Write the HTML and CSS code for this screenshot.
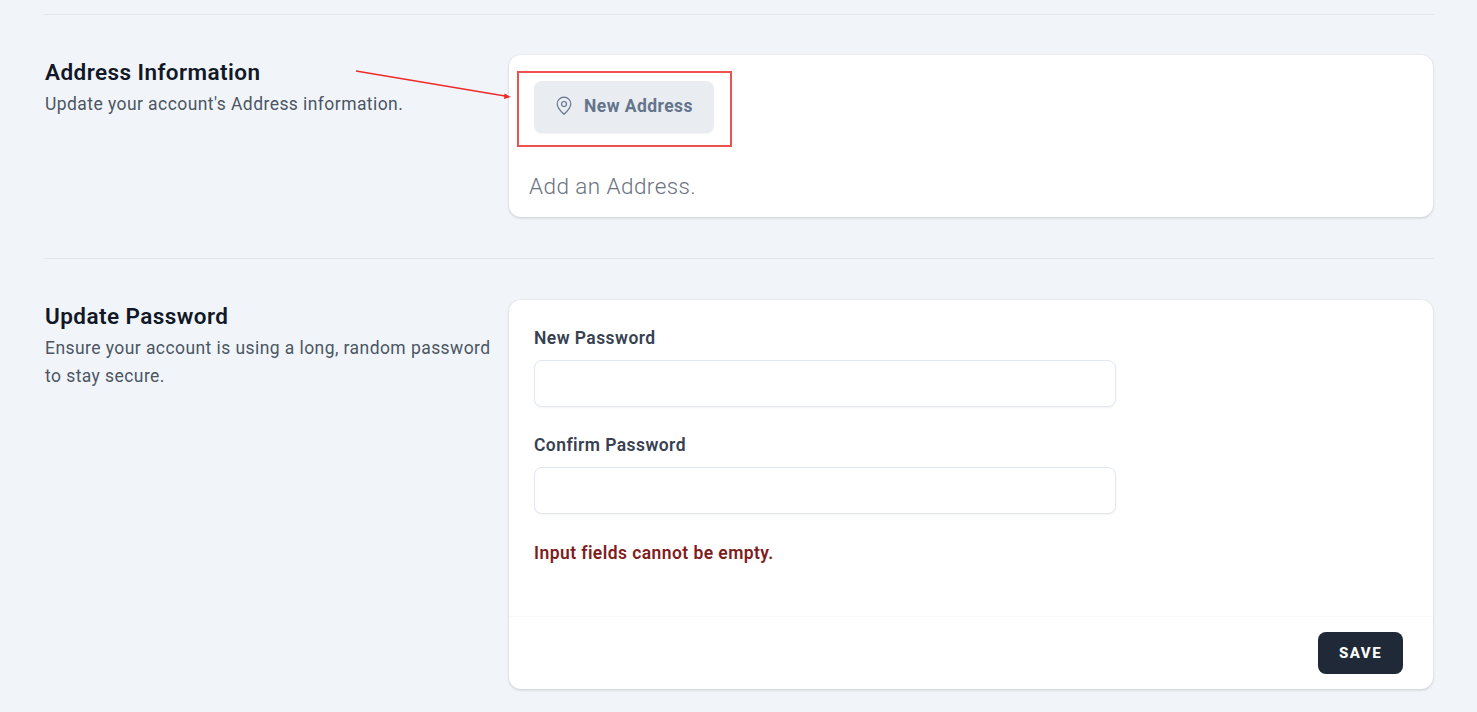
FILE: index.html
```html
<!DOCTYPE html>
<html lang="en">
<head>
<meta charset="utf-8">
<title>Profile</title>
<link rel="stylesheet" href="styles.css">
</head>
<body>
<main class="page">
  <hr class="divider">
  <section class="section section-address">
    <div class="intro">
      <h2 class="intro-title">Address Information</h2>
      <p class="intro-text">Update your account's Address information.</p>
    </div>
    <div class="card card-address">
      <button class="btn-address" type="button">
        <svg class="pin" viewBox="0 0 18 20" width="18" height="20" fill="none" stroke="currentColor" stroke-width="1.2" stroke-linecap="round" stroke-linejoin="round"><path d="M15.800 8c0 4-6.800 10.300-6.800 10.300S2.200 12 2.200 8a6.800 6.800 0 0 1 13.600 0z"/><circle cx="9" cy="8" r="2.500"/></svg>
        <span>New Address</span>
      </button>
      <p class="empty">Add an Address.</p>
    </div>
  </section>
  <hr class="divider">
  <section class="section section-password">
    <div class="intro">
      <h2 class="intro-title">Update Password</h2>
      <p class="intro-text">Ensure your account is using a long, random password to stay secure.</p>
    </div>
    <form class="card card-password">
      <div class="fields">
        <label class="label" for="new-pass">New Password</label>
        <input class="input" id="new-pass" type="password">
        <label class="label label-second" for="confirm-pass">Confirm Password</label>
        <input class="input" id="confirm-pass" type="password">
        <p class="error">Input fields cannot be empty.</p>
      </div>
      <div class="actions">
        <button class="btn-save" type="button">SAVE</button>
      </div>
    </form>
  </section>
</main>
<svg class="annotation-arrow" width="170" height="40" viewBox="0 0 170 40"><line x1="1" y1="1" x2="150" y2="26" stroke="#ee2b2b" stroke-width="1.300"/><polygon points="156,27 149.500,23.500 149,29" fill="#ee2b2b"/></svg>
<div class="annotation-box"></div>
</body>
</html>
```
FILE: styles.css
```css
* { box-sizing: border-box; }
html, body { height: 100%; }
body {
  margin: 0;
  height: 712px;
  overflow: hidden;
  background: #f1f5f9;
  font-family: Roboto, "Liberation Sans", sans-serif;
  letter-spacing: .43px;
  position: relative;
}
.page { padding: 14px 44px 0; }
.divider { margin: 0 -1px 0 0; border: 0; border-top: 1px solid #e2e8f0; }
.section {
  display: grid;
  grid-template-columns: 447px 1fr;
  gap: 18px;
}
.section-address { padding: 40px 0 41px; }
.section-password { padding: 41px 0 0; }
.intro { padding: 2px 0 0 1px; }
.section-password .intro { padding-top: 1px; }
.intro-title {
  margin: 0;
  font-size: 22.5px;
  line-height: 31px;
  font-weight: 600;
  color: #111827;
}
.intro-text {
  margin: 2px 0 0;
  font-size: 17.5px;
  line-height: 28px;
  color: #4b5563;
}
.card {
  background: #fff;
  border-radius: 12px;
  box-shadow: 0 0 0 1px rgba(226, 232, 240, .35), 0 1px 3px rgba(15, 23, 42, .14), 0 1px 2px rgba(15, 23, 42, .08);
}
.card-address { height: 162px; padding: 26px 25px 0 20px; }
.btn-address {
  display: flex;
  align-items: center;
  gap: 11px;
  width: 180px;
  height: 52px;
  margin-left: 5px;
  padding: 0 0 2px 21px;
  border: 0;
  border-radius: 8px;
  background: #e9edf2;
  color: #64748b;
  font-family: inherit;
  font-size: 17.5px;
  font-weight: 700;
  letter-spacing: inherit;
  box-shadow: 0 1px 2px rgba(15, 23, 42, .05);
}
.pin { flex: none; }
.empty {
  margin: 37px 0 0;
  font-size: 22.5px;
  line-height: 32px;
  font-weight: 300;
  color: #6b7280;
}
.card-password {
  height: 389px;
  display: flex;
  flex-direction: column;
  justify-content: space-between;
}
.fields { padding: 26px 25px 0; }
.label {
  display: block;
  font-size: 17.5px;
  line-height: 25px;
  font-weight: 600;
  color: #374151;
}
.label-second { margin-top: 26px; }
.input {
  display: block;
  width: 582px;
  height: 47px;
  margin-top: 9px;
  border: 1px solid #e2e8f0;
  border-radius: 8px;
  background: #fff;
  box-shadow: 0 1px 2px rgba(15, 23, 42, .05);
}
.error {
  margin: 27px 0 0;
  font-size: 17.5px;
  line-height: 25px;
  font-weight: 600;
  color: #7f1d1d;
}
.actions {
  height: 73px;
  display: flex;
  justify-content: flex-end;
  align-items: flex-start;
  padding: 15px 30px 0 0;
  border-top: 1px solid #f8fafc;
}
.btn-save {
  width: 85px;
  height: 42px;
  border: 0;
  border-radius: 8px;
  background: #1f2937;
  color: #fff;
  font-family: inherit;
  font-size: 15px;
  font-weight: 800;
  letter-spacing: 1.5px;
}
.annotation-arrow { position: absolute; left: 355px; top: 70px; }
.annotation-box {
  position: absolute;
  left: 517px;
  top: 71px;
  width: 215px;
  height: 76px;
  border: 2px solid #ef5050;
}
```
